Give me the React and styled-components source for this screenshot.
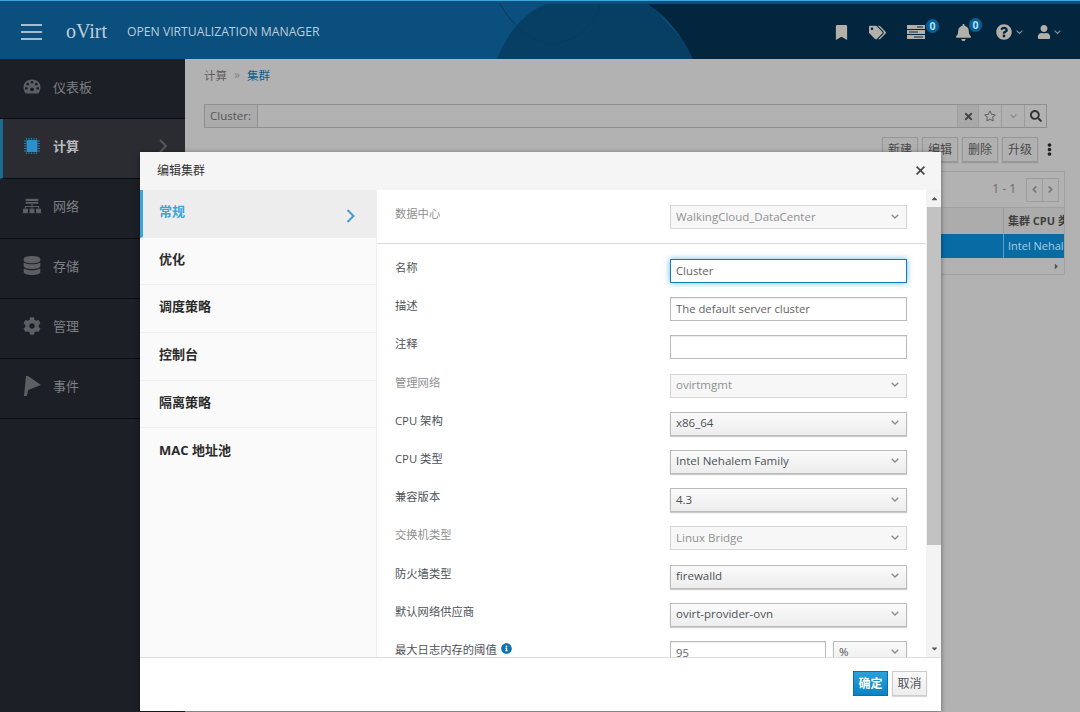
import React from 'react';
import styled, { createGlobalStyle } from 'styled-components';
import {
  FaBookmark, FaTags, FaBell, FaQuestionCircle, FaUser, FaCog, FaDatabase,
  FaAngleRight, FaAngleLeft, FaTimes, FaRegStar, FaSearch, FaEllipsisV, FaInfoCircle, FaCaretRight, FaCaretUp, FaCaretDown,
} from 'react-icons/fa';

const FONT = '"Open Sans", "Noto Sans CJK SC", sans-serif';

const Global = createGlobalStyle`
  html, body { margin: 0; padding: 0; height: 100%; background: #b2b2b2; overflow: hidden; }
  #root { height: 712px; width: 1080px; position: relative; overflow: hidden; font-family: ${FONT}; font-size: 12px; }
  * { box-sizing: border-box; }
`;

const Page = styled.div`display: flex; flex-direction: column; height: 712px;`;

const Header = styled.header`
  position: relative; flex: 0 0 59px; display: flex; align-items: center; justify-content: space-between;
  background: #0a4f7e; border-top: 1px solid #3aa6dc; overflow: hidden;
`;
const HeaderArt = styled.svg`position: absolute; left: 0; top: -1px; width: 1080px; height: 59px;`;
const Brand = styled.div`position: relative; display: flex; align-items: center; padding-left: 21px; margin-top: 3px;`;
const Burger = styled.div`
  width: 21px; height: 16px; border-top: 2px solid #a9bccb; border-bottom: 2px solid #a9bccb; position: relative;
  &::after { content: ''; position: absolute; left: 0; right: 0; top: 5px; height: 2px; background: #a9bccb; }
`;
const Logo = styled.div`font: 400 20px "Liberation Serif", serif; color: #c4ced6; margin-left: 24px; width: 61px;`;
const Product = styled.div`font: 400 12.2px ${FONT}; color: #c0ccd6; white-space: nowrap;`;
const TopIcons = styled.div`position: relative; display: flex; align-items: center; padding-right: 19px; margin-top: 4px; color: #b3afa9;`;
const TopIcon = styled.div`
  position: relative; display: flex; align-items: center; margin-left: ${p => p.$ml}px; font-size: ${p => p.$size || 16}px;
`;
const Badge = styled.span`
  position: absolute; left: ${p => p.$left}px; top: -6px; width: 13px; height: 14px; border-radius: 7px; background: #075f93;
  color: #b9dff2; font: 700 10.5px/14px ${FONT}; text-align: center;
`;
const Chevron = styled.svg`
  flex: none; width: ${p => p.$w || 8}px; height: ${p => (p.$w || 8) * 0.625}px; fill: none; stroke: ${p => p.$color || '#8a8a8a'}; stroke-width: 1.3;
  margin-left: ${p => p.$ml || 0}px;
`;
const ThinDown = props => <Chevron viewBox="0 0 8 5" {...props}><path d="M.7.7 4 4 7.300.7" /></Chevron>;

const Body = styled.div`flex: 1; display: flex; min-height: 0;`;
const Sidebar = styled.nav`flex: 0 0 185px; background: #1c1f26;`;
const SideItem = styled.div`
  height: 60px; display: flex; align-items: center; padding-left: ${p => p.$active ? 20 : 23}px; padding-bottom: 6px; gap: 12px;
  border-bottom: 1px solid #0b0c0f; color: ${p => p.$active ? '#b9bbbd' : '#7d7f83'}; font-size: 13px; position: relative;
  font-weight: ${p => p.$active ? 700 : 400};
  background: ${p => p.$active ? '#2a2c32' : 'transparent'};
  border-left: ${p => p.$active ? '3px solid #1b6a90' : 'none'};
  &:first-child { padding-bottom: 5px; }
`;
const SideIcon = styled.span`flex: 0 0 18px; min-width: 0; height: 20px; display: flex; align-items: center; justify-content: center; font-size: ${p => p.$size || 18}px; color: #5d5f63;`;
const SideChevron = styled.svg`position: absolute; left: 154px; top: 20px; width: 12px; height: 14px; fill: none; stroke: #55575b; stroke-width: 2;`;

const Main = styled.main`flex: 1; min-width: 0; background: #b2b2b2; padding: 9px 15px 0 19px; color: #545454;`;
const Crumbs = styled.div`display: flex; gap: 7px; line-height: 15px; height: 15px; color: #5e5e5e; font-size: 11.5px;`;
const CrumbSep = styled.span`color: #858585; font-size: 12px; line-height: 14px;`;
const CrumbLink = styled.span`color: #0a5f90;`;
const SearchBar = styled.div`
  margin: 21px 18px 0 0; height: 24px; display: flex; border: 1px solid #8f8f8f; background: #b2b2b2; color: #555;
`;
const SearchLabel = styled.div`width: 53px; padding-left: 5px; line-height: 21px; font-size: 11.5px; border-right: 1px solid #8f8f8f; background: #ababab;`;
const SearchField = styled.div`flex: 1;`;
const SearchBtn = styled.div`
  width: ${p => p.$w}px; display: flex; align-items: center; justify-content: center; border-left: 1px solid #9c9c9c;
  font-size: ${p => p.$size || 11}px; color: ${p => p.$color || '#444'}; background: ${p => p.$bg || 'transparent'};
`;
const Toolbar = styled.div`margin-top: 9px; height: 25px; display: flex; justify-content: flex-end; align-items: center; gap: 4px; padding-right: 9px;`;
const ToolBtn = styled.div`
  width: 36px; height: 25px; border: 1px solid #979797; background: #b0b0b0; text-align: center; line-height: 23px; color: #4a4a4a;
  box-shadow: 0 1px 1px rgba(0,0,0,.15);
`;
const Kebab = styled(FaEllipsisV)`font-size: 13px; color: #222; margin-left: 1px;`;
const TablePanel = styled.div`margin-top: 9px; height: 104px; border: 1px solid #a0a0a0; display: flex; flex-direction: column;`;
const Pager = styled.div`height: 35px; display: flex; justify-content: flex-end; align-items: center; padding-right: 5px; color: #6a6a6a;`;
const PagerText = styled.span`margin: 0 11px 2px 0;`;
const PagerBtn = styled.div`
  width: 17px; height: 24px; border: 1px solid #9d9d9d; display: flex; align-items: center; justify-content: center; margin-left: -1px; font-size: 11px; color: #777;
`;
const HeadRow = styled.div`height: 27px; background: #acacac; display: flex; justify-content: flex-end; border-top: 1px solid #a0a0a0;`;
const HeadCell = styled.div`width: 61px; padding-left: 4px; border-left: 1px solid #9a9a9a; white-space: nowrap; overflow: hidden; font-weight: 700; line-height: 26px; color: #3f3f3f; font-size: 11px;`;
const BlueRow = styled.div`height: 24px; background: #086ba4; display: flex; justify-content: flex-end;`;
const BlueCell = styled.div`width: 61px; padding-left: 4px; border-left: 1px solid #5aa0c8; white-space: nowrap; overflow: hidden; line-height: 24px; color: #a9cfe4; font-size: 11px;`;
const ScrollRow = styled.div`flex: 1; display: flex; justify-content: flex-end; align-items: center; padding-right: 3px; font-size: 9px; color: #555;`;

const Modal = styled.div`
  position: absolute; left: 140px; top: 152px; width: 801px; height: 559px; background: #fff; display: flex; flex-direction: column;
  box-shadow: 0 1px 5px rgba(0,0,0,.45);
`;
const ModalHead = styled.div`
  flex: 0 0 38px; background: #f5f5f5; display: flex; align-items: center; justify-content: space-between; padding: 0 16px 2px 17px; color: #333; font-size: 12px;
`;
const Close = styled.svg`width: 9px; height: 9px; stroke: #444; stroke-width: 1.6; fill: none;`;
const ModalBody = styled.div`flex: 1; min-height: 0; display: flex; background: #f5f5f5;`;
const ModalNav = styled.div`flex: 0 0 237px; background: #fafafa; border-right: 1px solid #f0f0f0;`;
const NavItem = styled.div`
  height: 47.7px; display: flex; align-items: center; justify-content: space-between; padding: 0 21px 6px ${p => p.$active ? 16 : 19}px; font-size: 13px; font-weight: 700;
  color: ${p => p.$active ? '#39a5dc' : '#2b2b2b'}; background: ${p => p.$active ? '#ededed' : 'transparent'};
  border-left: ${p => p.$active ? '3px solid #39a5dc' : 'none'}; border-bottom: 1px solid ${p => p.$active ? '#ededed' : '#f0f0f0'};
  &:last-child { border-bottom: none; }
`;
const NavChevron = styled.svg`width: 9px; height: 14px; fill: none; stroke: #4a9bc9; stroke-width: 2; margin-top: 11px;`;
const FormPane = styled.div`flex: 0 0 549px; background: #fff; overflow: hidden;`;
const TopSection = styled.div`height: 54px; padding-top: 15px; border-bottom: 1px solid #d9d9d9; margin-bottom: 15px;`;
const Row = styled.div`height: 38.2px; display: flex; padding-left: 18px; padding-right: 19px; justify-content: space-between;`;
const Label = styled.div`
  display: flex; align-items: center; gap: 4px; height: 16px; color: ${p => p.$off ? '#8f8f8f' : '#4d5258'}; font-size: 11.3px; white-space: nowrap;
`;
const Info = styled(FaInfoCircle)`font-size: 11px; color: #0a73b0;`;
const Controls = styled.div`width: 237px; display: flex; gap: 7px;`;
const Input = styled.div`
  flex: 1; height: 24px; background: #fff; border: 1px solid ${p => p.$focus ? '#0f7fb5' : '#bbb'}; padding-left: 5px; line-height: 21px; color: #5f6367; font-size: 11.3px;
  box-shadow: ${p => p.$focus ? '0 0 6px rgba(0,136,206,.6)' : 'inset 0 1px 1px rgba(0,0,0,.08)'}; white-space: nowrap;
`;
const Select = styled.div`
  flex: ${p => p.$w ? `0 0 ${p.$w}px` : 1}; height: 24px; display: flex; align-items: center; justify-content: space-between; padding: 0 7px 2px 5px; font-size: 11.5px;
  border: 1px solid ${p => p.$off ? '#d6d6d6' : '#bbb'}; color: ${p => p.$off ? '#8f9193' : '#4d5258'};
  background: ${p => p.$off ? '#f7f7f7' : 'linear-gradient(#fafafa, #ededed)'};
  box-shadow: ${p => p.$off ? 'none' : '0 1px 1px rgba(0,0,0,.2)'}; white-space: nowrap;
`;
const Track = styled.div`flex: 1; display: flex; flex-direction: column; align-items: center; padding-left: 1px; color: #555; font-size: 9px; background: #f3f3f3;`;
const TrackEnd = styled.div`height: 17px; display: flex; align-items: center; justify-content: center;`;
const Thumb = styled.div`flex: 0 0 338px; width: 100%; background: #c2c2c2;`;
const TrackSpace = styled.div`flex: 1;`;
const ModalFoot = styled.div`flex: 0 0 54px; border-top: 1px solid #ddd; background: #fff; display: flex; justify-content: flex-end; align-items: flex-start; gap: 4px; padding: 13px 14px 0 0;`;
const PrimaryBtn = styled.div`width: 35px; height: 25px; background: linear-gradient(#2a9fdc, #0b84c4); border: 1px solid #0b6fa6; color: #fff; font-weight: 700; text-align: center; line-height: 23px;`;
const CancelBtn = styled.div`width: 35px; height: 25px; background: linear-gradient(#fafafa, #ededed); border: 1px solid #ccc; color: #4d5258; text-align: center; line-height: 23px; box-shadow: 0 1px 1px rgba(0,0,0,.15);`;

const Dash = () => (
  <svg width="19" height="17" viewBox="0 0 19 17"><path fill="#5d5f63" d="M9.500 1a9 8 0 0 0-9 8c0 2.500 1 5 2.500 7h13c1.500-2 2.500-4.500 2.500-7a9 8 0 0 0-9-8z" /><g fill="#1c1f26"><circle cx="9.500" cy="4" r="1.400" /><circle cx="5" cy="6" r="1.400" /><circle cx="14" cy="6" r="1.400" /><circle cx="3.500" cy="10.500" r="1.400" /><circle cx="15.500" cy="10.500" r="1.400" /><circle cx="9.500" cy="11.500" r="2" /></g></svg>
);
const Chip = () => (
  <svg width="18" height="20" viewBox="0 0 18 20"><rect x="3.500" y="4" width="11" height="12" fill="#2f8fca" /><g stroke="#2a7aab" strokeWidth="1.200" fill="none"><path d="M3.500 2v1.500M6 2v1.500M8.500 2v1.500M11 2v1.500M13.500 2v1.500M3.500 16.500V18M6 16.500V18M8.500 16.500V18M11 16.500V18M13.500 16.500V18M1 5h2M1 7.500h2M1 10h2M1 12.500h2M1 15h2M15 5h2M15 7.500h2M15 10h2M15 12.500h2M15 15h2" /></g></svg>
);
const Net = () => (
  <svg width="20" height="16" viewBox="0 0 20 16"><g fill="#5d5f63"><rect x="3" y="0" width="14" height="2.500" /><rect x="3" y="3.500" width="14" height="2" /><rect x="0" y="11" width="5.500" height="5" /><rect x="7.250" y="11" width="5.500" height="5" /><rect x="14.500" y="11" width="5.500" height="5" /><path d="M9.500 5.500h1V8H18v3h-1V9h-6.500v2h-1V9H3v2H2V8h7.500z" /></g></svg>
);
const Flag = () => (
  <svg width="18" height="20" viewBox="0 0 18 20"><path fill="#5d5f63" d="M3 0h2l13 9-12.800 5L3.800 20H1z" /></svg>
);
const Tasks = () => (
  <svg width="18" height="14" viewBox="0 0 18 14"><g fill="#b3afa9"><rect width="18" height="4" /><rect y="5" width="18" height="4" /><rect y="10" width="18" height="4" /></g><g fill="#052a42"><rect x="10" y="1.500" width="6" height="1" /><rect x="2" y="6.500" width="9" height="1" /><rect x="7" y="11.500" width="9" height="1" /></g></svg>
);

const menu = [
  ['仪表板', <Dash />], ['计算', <Chip />, true], ['网络', <Net />], ['存储', <FaDatabase />, false, 19], ['管理', <FaCog />], ['事件', <Flag />],
];
const nav = ['常规', '优化', '调度策略', '控制台', '隔离策略', 'MAC 地址池'];
const rows = [
  { l: '名称', t: 'i', v: 'Cluster', focus: true },
  { l: '描述', t: 'i', v: 'The default server cluster' },
  { l: '注释', t: 'i', v: '' },
  { l: '管理网络', t: 's', v: 'ovirtmgmt', off: true },
  { l: 'CPU 架构', t: 's', v: 'x86_64' },
  { l: 'CPU 类型', t: 's', v: 'Intel Nehalem Family' },
  { l: '兼容版本', t: 's', v: '4.3' },
  { l: '交换机类型', t: 's', v: 'Linux Bridge', off: true },
  { l: '防火墙类型', t: 's', v: 'firewalld' },
  { l: '默认网络供应商', t: 's', v: 'ovirt-provider-ovn' },
];

export default function App() {
  return (
    <Page>
      <Global />
      <Header>
        <HeaderArt viewBox="0 0 1080 59" aria-hidden="true">
          <path fill="#063f63" d="M497 59C508 33 522 14 546 4H650L700 59z" />
          <path fill="#03263e" d="M648 4C668 18 684 38 693 59H1080V4z" />
          <path fill="none" stroke="#073a5c" strokeWidth="1" d="M500 4C515 30 535 43 552 43C572 43 594 28 600 4" />
          <rect y="1" width="1080" height="3" fill="#09507f" />
        </HeaderArt>
        <Brand>
          <Burger />
          <Logo>oVirt</Logo>
          <Product>OPEN VIRTUALIZATION MANAGER</Product>
        </Brand>
        <TopIcons>
          <TopIcon $ml={0} $size={15}><FaBookmark /></TopIcon>
          <TopIcon $ml={20} $size={17}><FaTags /></TopIcon>
          <TopIcon $ml={21}><Tasks /><Badge $left={19}>0</Badge></TopIcon>
          <TopIcon $ml={30} $size={17}><FaBell /><Badge $left={14}>0</Badge></TopIcon>
          <TopIcon $ml={24}><FaQuestionCircle /><ThinDown $w={7} $ml={4} $color="#7f8f9a" /></TopIcon>
          <TopIcon $ml={14} $size={14}><FaUser /><ThinDown $w={7} $ml={3} $color="#7f8f9a" /></TopIcon>
        </TopIcons>
      </Header>
      <Body>
        <Sidebar>
          {menu.map(([t, icon, active, size]) => (
            <SideItem key={t} $active={active}>
              <SideIcon $size={size}>{icon}</SideIcon>
              {t}
              {active && <SideChevron viewBox="0 0 12 14"><path d="M3 1l6 6-6 6" /></SideChevron>}
            </SideItem>
          ))}
        </Sidebar>
        <Main>
          <Crumbs>计算<CrumbSep>»</CrumbSep><CrumbLink>集群</CrumbLink></Crumbs>
          <SearchBar>
            <SearchLabel>Cluster:</SearchLabel>
            <SearchField />
            <SearchBtn $w={21} $bg="#a8a8a8"><FaTimes /></SearchBtn>
            <SearchBtn $w={23} $size={12} $color="#666"><FaRegStar /></SearchBtn>
            <SearchBtn $w={23}><ThinDown $w={7} /></SearchBtn>
            <SearchBtn $w={22} $size={12} $color="#333"><FaSearch /></SearchBtn>
          </SearchBar>
          <Toolbar>
            <ToolBtn>新建</ToolBtn><ToolBtn>编辑</ToolBtn><ToolBtn>删除</ToolBtn><ToolBtn>升级</ToolBtn><Kebab />
          </Toolbar>
          <TablePanel>
            <Pager>
              <PagerText>1 - 1</PagerText>
              <PagerBtn><FaAngleLeft /></PagerBtn><PagerBtn><FaAngleRight /></PagerBtn>
            </Pager>
            <HeadRow><HeadCell>集群 CPU 类型</HeadCell></HeadRow>
            <BlueRow><BlueCell>Intel Nehalem</BlueCell></BlueRow>
            <ScrollRow><FaCaretRight /></ScrollRow>
          </TablePanel>
        </Main>
      </Body>
      <Modal>
        <ModalHead>编辑集群<Close viewBox="0 0 9 9"><path d="M.6.6l7.800 7.800M8.400.6.600 8.400" /></Close></ModalHead>
        <ModalBody>
          <ModalNav>
            {nav.map((t, i) => (
              <NavItem key={t} $active={i === 0}>{t}{i === 0 && <NavChevron viewBox="0 0 9 14"><path d="M1.500 1l6 6-6 6" /></NavChevron>}</NavItem>
            ))}
          </ModalNav>
          <FormPane>
            <TopSection>
              <Row>
                <Label $off>数据中心</Label>
                <Controls><Select $off>WalkingCloud_DataCenter<ThinDown /></Select></Controls>
              </Row>
            </TopSection>
            {rows.map(r => (
              <Row key={r.l}>
                <Label $off={r.off}>{r.l}</Label>
                <Controls>
                  {r.t === 'i'
                    ? <Input $focus={r.focus}>{r.v}</Input>
                    : <Select $off={r.off}>{r.v}<ThinDown /></Select>}
                </Controls>
              </Row>
            ))}
            <Row>
              <Label>最大日志内存的阈值<Info /></Label>
              <Controls><Input>95</Input><Select $w={74}>%<ThinDown /></Select></Controls>
            </Row>
          </FormPane>
          <Track>
            <TrackEnd><FaCaretUp /></TrackEnd>
            <Thumb />
            <TrackSpace />
            <TrackEnd><FaCaretDown /></TrackEnd>
          </Track>
        </ModalBody>
        <ModalFoot><PrimaryBtn>确定</PrimaryBtn><CancelBtn>取消</CancelBtn></ModalFoot>
      </Modal>
    </Page>
  );
}
